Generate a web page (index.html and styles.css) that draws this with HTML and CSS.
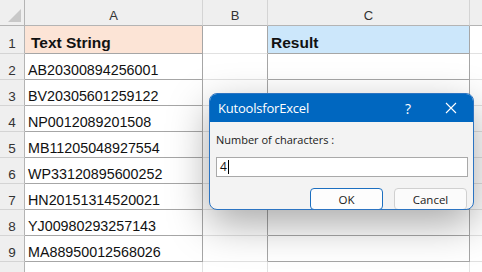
FILE: index.html
```html
<!DOCTYPE html>
<html lang="en">
<head>
    <meta charset="UTF-8">
    <title>Kutools - Number of characters</title>
    <link rel="stylesheet" href="styles.css">
</head>
<body>
    <!-- Sheet -->
    <div class="sheet">
        <!-- header row -->
        <div class="hd corner"><span class="tri"></span></div>
        <div class="hd">A</div>
        <div class="hd">B</div>
        <div class="hd">C</div>
        <div class="hd rest"></div>

        <div class="rn r1">1</div>
        <div class="cell a head-a r1">Text String</div>
        <div class="cell b r1"></div>
        <div class="cell c head-c r1">Result</div>
        <div class="cell rest r1"></div>

        <div class="rn">2</div><div class="cell a">AB20300894256001</div><div class="cell b"></div><div class="cell c"></div><div class="cell rest"></div>
        <div class="rn">3</div><div class="cell a">BV20305601259122</div><div class="cell b"></div><div class="cell c"></div><div class="cell rest"></div>
        <div class="rn">4</div><div class="cell a">NP0012089201508</div><div class="cell b"></div><div class="cell c"></div><div class="cell rest"></div>
        <div class="rn">5</div><div class="cell a">MB11205048927554</div><div class="cell b"></div><div class="cell c"></div><div class="cell rest"></div>
        <div class="rn">6</div><div class="cell a">WP33120895600252</div><div class="cell b"></div><div class="cell c"></div><div class="cell rest"></div>
        <div class="rn">7</div><div class="cell a">HN20151314520021</div><div class="cell b"></div><div class="cell c"></div><div class="cell rest"></div>
        <div class="rn">8</div><div class="cell a">YJ00980293257143</div><div class="cell b"></div><div class="cell c"></div><div class="cell rest"></div>
        <div class="rn">9</div><div class="cell a">MA88950012568026</div><div class="cell b"></div><div class="cell c"></div><div class="cell rest"></div>
        <div class="rn r10">10</div><div class="cell plain"></div><div class="cell plain"></div><div class="cell plain"></div><div class="cell rest"></div>
    </div>

    <!-- Dialog on top of the sheet -->
    <div class="dialog">
        <div class="title">
            <span class="title-text">KutoolsforExcel</span>
            <span class="help">?</span>
            <svg class="close" width="12" height="12" viewBox="0 0 12 12">
                <path d="M1 1 L11 11 M11 1 L1 11" stroke="#ffffff" stroke-width="1.1" fill="none"/>
            </svg>
        </div>
        <div class="body">
            <div class="label">Number of characters :</div>
            <div class="input">4<span class="caret"></span></div>
            <div class="buttons">
                <div class="btn ok">OK</div>
                <div class="btn">Cancel</div>
            </div>
        </div>
    </div>
</body>
</html>
```

FILE: styles.css
```css
/* page */
body {
    margin: 0;
    width: 482px;
    height: 272px;
    overflow: hidden;
    background: #ffffff;
    font-family: "Liberation Sans", Arial, sans-serif;
    position: relative;
}

/* sheet grid */
.sheet {
    display: grid;
    grid-template-columns: 25px 178px 65px 202px 12px;
    grid-template-rows: 26px 28px repeat(8, 26px) 26px;
}

.hd {
    background: #efefef;
    border-right: 1px solid #d4d4d4;
    border-bottom: 1px solid #b4b4b4;
    box-sizing: border-box;
    display: flex;
    align-items: center;
    justify-content: center;
    font-size: 13px;
    color: #333;
    padding-top: 5px;
}

.hd.rest {
    border-right: none;
}

.corner {
    position: relative;
    border-right: 1px solid #b4b4b4;
}

.tri {
    position: absolute;
    right: 3px;
    bottom: 3px;
    width: 0;
    height: 0;
    border-left: 13px solid transparent;
    border-bottom: 13px solid #c8c8c8;
}

/* row numbers */
.rn {
    background: #efefef;
    border-right: 1px solid #b4b4b4;
    border-bottom: 1px solid #d4d4d4;
    box-sizing: border-box;
    display: flex;
    align-items: center;
    justify-content: center;
    font-size: 13.5px;
    color: #333;
    padding-top: 8px;
}

.rn.r10 {
    align-items: flex-start;
    padding-top: 7px;
}

.cell {
    box-sizing: border-box;
    border-right: 1px solid #e1e1e1;
    border-bottom: 1px solid #e1e1e1;
    display: flex;
    align-items: center;
    font-size: 14.3px;
    color: #111;
    padding-top: 7px;
}

.cell.a {
    border-right-color: #a6a6a6;
    border-bottom-color: #a6a6a6;
    padding-left: 3px;
}

.cell.b {
    border-right-color: #a6a6a6;
}

.cell.c {
    border-right-color: #a6a6a6;
    border-bottom-color: #a6a6a6;
}

.cell.rest {
    border-right: none;
}

.head-a {
    background: #fce4d6;
    font-weight: bold;
    font-size: 15.5px;
    padding-left: 6px !important;
}

.head-c {
    background: #cce7fb;
    font-weight: bold;
    font-size: 15.5px;
    padding-left: 3px;
}

/* dialog */
.dialog {
    position: absolute;
    left: 209px;
    top: 93px;
    width: 265px;
    height: 117px;
    box-sizing: border-box;
    border: 1px solid #2c74c2;
    border-radius: 8px;
    overflow: hidden;
    background: #f3f3f3;
    box-shadow: 0 14px 40px rgba(0, 0, 0, 0.34);
    font-family: "Open Sans", "Noto Sans", sans-serif;
}

.title {
    height: 28px;
    background: #0067c0;
    color: #ffffff;
    display: flex;
    align-items: center;
    padding-left: 8px;
    font-size: 13px;
}

.title-text {
    flex: 1;
    letter-spacing: -0.2px;
}

.help {
    font-size: 14px;
    margin-right: 34px;
}

.close {
    margin-right: 16px;
}

.body {
    padding: 10px 5px 0 6px;
}

.label {
    font-size: 11px;
    color: #1a1a1a;
    height: 16px;
    line-height: 16px;
}

.input {
    margin-top: 9px;
    height: 20px;
    box-sizing: border-box;
    background: #ffffff;
    border: 1px solid #a9a9a9;
    font-size: 12px;
    line-height: 18px;
    padding-left: 3px;
    display: flex;
    align-items: center;
    color: #111;
}

.caret {
    display: inline-block;
    width: 1px;
    height: 14px;
    background: #000;
    margin-left: 1px;
}

.buttons {
    display: flex;
    justify-content: flex-end;
    gap: 11px;
    margin-top: 11px;
    padding-right: 1px;
}

.btn {
    width: 73px;
    height: 22px;
    box-sizing: border-box;
    border: 1px solid #d0d0d0;
    border-radius: 4px;
    background: #fbfbfb;
    font-size: 11.5px;
    color: #1a1a1a;
    display: flex;
    align-items: center;
    justify-content: center;
}

.btn.ok {
    border-color: #1c6fc0;
    background: #fdfdfd;
}
```
